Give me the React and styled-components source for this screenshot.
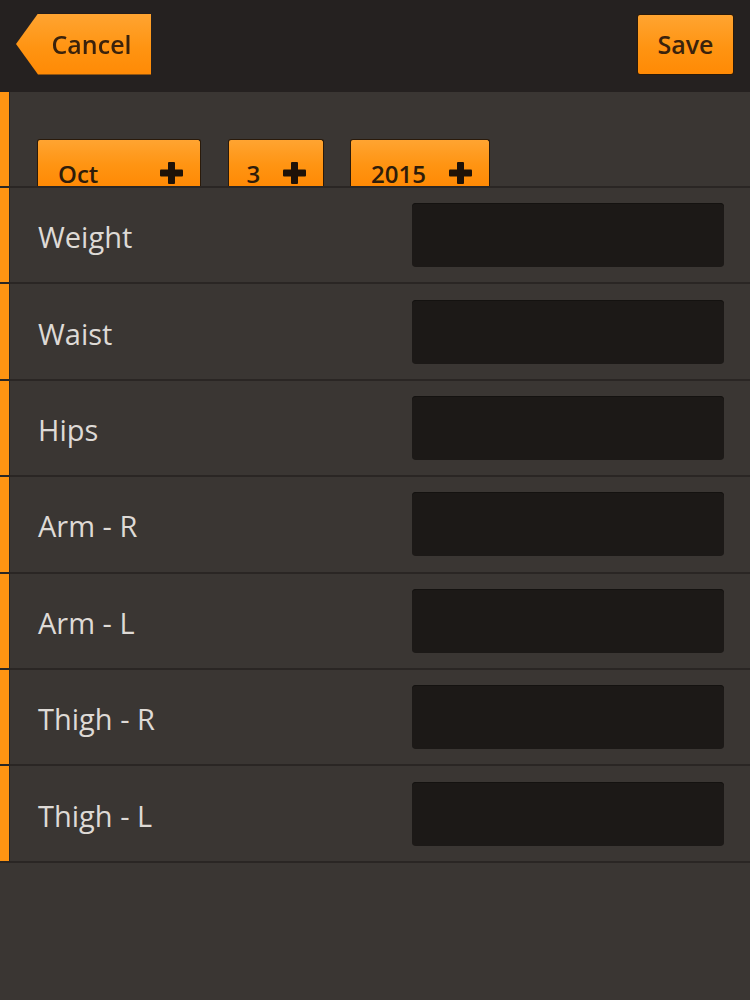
import React from "react";
import styled, { createGlobalStyle } from "styled-components";

const GlobalStyle = createGlobalStyle`
  html, body {
    margin: 0;
    padding: 0;
    background-color: #3a3633;
    font-family: "Open Sans", "Liberation Sans", sans-serif;
  }
  * {
    box-sizing: border-box;
  }
`;

const orange = "linear-gradient(to bottom, #ffa431 0%, #ff9412 55%, #ff8a05 100%)";

const Page = styled.div`
  width: 750px;
  min-height: 1000px;
  background-color: #3a3633;
`;

const Header = styled.div`
  height: 92px;
  display: flex;
  align-items: center;
  justify-content: space-between;
  padding: 0 16px 4px 16px;
  background-color: #252120;
`;

const CancelButton = styled.button`
  width: 135px;
  height: 61px;
  border: none;
  padding: 0 0 0 16px;
  background: ${orange};
  clip-path: polygon(22px 0, 100% 0, 100% 100%, 22px 100%, 0 50%);
  font-family: "Open Sans", "Liberation Sans", sans-serif;
  font-size: 25px;
  font-weight: 600;
  color: #3a220c;
  filter: drop-shadow(0 0 1px #1a0f05);
`;

const SaveButton = styled.button`
  width: 97px;
  height: 61px;
  border: 1px solid #2a1a0a;
  border-radius: 3px;
  padding: 0;
  background: ${orange};
  font-family: "Open Sans", "Liberation Sans", sans-serif;
  font-size: 25px;
  font-weight: 600;
  color: #3a220c;
`;

const Section = styled.div`
  box-shadow: inset 9px 0 0 #ff9412, inset 10px 0 0 #2a2624;
  border-bottom: 2px solid #2a2624;
`;

const DateRow = styled(Section)`
  height: 96px;
  display: flex;
  align-items: flex-end;
  padding-left: 37px;
  gap: 26.5px;
  overflow: hidden;
`;

const DateButton = styled.div`
  width: ${(p) => p.width}px;
  height: 47px;
  display: flex;
  align-items: center;
  justify-content: space-between;
  padding: 20px 17px 0 ${(p) => p.left}px;
  background: ${orange};
  border: 1px solid #2a1a0a;
  border-bottom: none;
  border-radius: 3px 3px 0 0;
  font-size: 24px;
  font-weight: 600;
  color: #2e1c0a;
`;

const FieldRow = styled(Section)`
  height: 96.4px;
  display: flex;
  align-items: center;
  justify-content: space-between;
  padding: 0 26px 0 38px;
`;

const Label = styled.span`
  font-size: 29px;
  color: #dedad6;
  padding-top: 3px;
`;

const Input = styled.input`
  width: 312px;
  height: 64px;
  border: none;
  border-radius: 4px;
  background-color: #1c1917;
  box-shadow: inset 0 1px 0 #141210;
  outline: none;
  color: #dedad6;
  font-size: 24px;
  padding: 0 12px;
`;

const PlusIcon = () => (
  <svg width="23" height="22" viewBox="0 0 23 22">
    <rect x="8" y="0" width="7" height="22" rx="1" fill="#1e1208" />
    <rect x="0" y="7.5" width="23" height="7" rx="1" fill="#1e1208" />
  </svg>
);

const dates = [
  { label: "Oct", width: 164, left: 20 },
  { label: "3", width: 96, left: 18 },
  { label: "2015", width: 140, left: 20 },
];

const fields = ["Weight", "Waist", "Hips", "Arm - R", "Arm - L", "Thigh - R", "Thigh - L"];

const App = () => {
  return (
    <Page>
      <GlobalStyle />
      <Header>
        <CancelButton>Cancel</CancelButton>
        <SaveButton>Save</SaveButton>
      </Header>
      <DateRow>
        {dates.map((d) => (
          <DateButton key={d.label} width={d.width} left={d.left}>
            {d.label}
            <PlusIcon />
          </DateButton>
        ))}
      </DateRow>
      {fields.map((f) => (
        <FieldRow key={f}>
          <Label>{f}</Label>
          <Input type="text" />
        </FieldRow>
      ))}
    </Page>
  );
};

export default App;
